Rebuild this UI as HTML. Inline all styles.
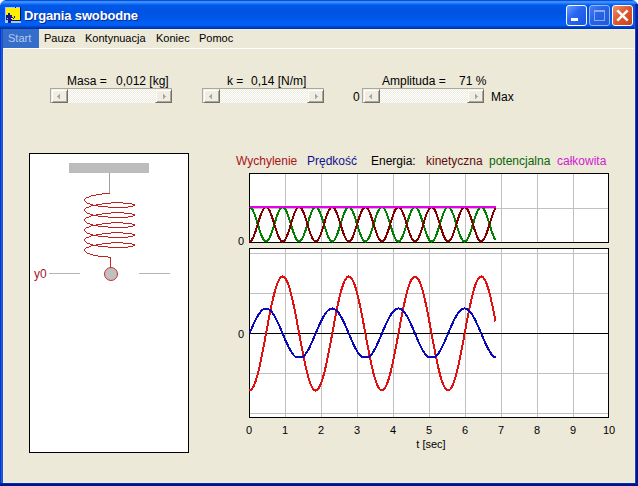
<!DOCTYPE html>
<html><head><meta charset="utf-8">
<style>
html,body{margin:0;padding:0;width:638px;height:486px;overflow:hidden;background:#fff;}
body{position:relative;font-family:"Liberation Sans",sans-serif;}
.a{position:absolute;white-space:pre;}
#title{position:absolute;left:0;top:0;width:638px;height:29px;border-radius:6px 6px 0 0;
background:linear-gradient(to bottom,#0A4FD6 0,#0A4FD6 1px,#3A8DFF 1px,#3A8DFF 3px,#1F78FA 3px,#1F78FA 4px,#0A66F0 4px,#0A66F0 5px,#0058E8 5px,#0054E2 12px,#0056E6 18px,#005EF4 22px,#0060F6 25px,#0052E2 26px,#0044C8 27px,#0036AC 28px,#0030A0 29px);}
#ttext{position:absolute;left:24px;top:8px;font-weight:bold;font-size:13px;color:#fff;text-shadow:1px 1px 0 #0A2A90;letter-spacing:-0.15px;}
.tb{position:absolute;top:5px;width:19px;height:19px;border:1px solid #fff;border-radius:3px;}
#lf{position:absolute;left:0;top:29px;width:3px;height:457px;background:linear-gradient(to right,#0038D2 0,#0038D2 1px,#1E5AE6 1px,#1E5AE6 2px,#2A4CAA 2px);}
#rf{position:absolute;left:635px;top:29px;width:3px;height:457px;background:linear-gradient(to right,#2A40A0 0,#2A40A0 1px,#001496 1px);}
#bf{position:absolute;left:0;top:483px;width:638px;height:3px;background:linear-gradient(to bottom,#0A2A90 0,#0A2A90 1px,#00138F 1px);}
#client{position:absolute;left:3px;top:29px;width:630px;height:452px;border:1px solid #E6F0FF;background:#ECE9D8;}
#menu{position:absolute;left:4px;top:30px;width:630px;height:18px;background:#ECE9D8;}
#mline{position:absolute;left:4px;top:48px;width:630px;height:1px;background:#fff;}
#start{position:absolute;left:3px;top:29px;width:36px;height:19px;background:#356DCB;}
.mi{position:absolute;top:32px;font-size:11px;line-height:13px;color:#000;}
.lbl{position:absolute;font-size:12px;line-height:14px;color:#000;white-space:pre;}
.sb{position:absolute;top:88px;width:122px;height:15px;}
.sbt{position:absolute;left:0;top:0;width:122px;height:15px;box-sizing:border-box;border-top:1px solid #ACA899;border-left:1px solid #ACA899;
background-color:#fff;background-image:linear-gradient(45deg,#EEECE0 25%,transparent 25%,transparent 75%,#EEECE0 75%),linear-gradient(45deg,#EEECE0 25%,transparent 25%,transparent 75%,#EEECE0 75%);background-size:2px 2px;background-position:0 0,1px 1px;}
.btn{position:absolute;top:1px;width:17px;height:14px;box-sizing:border-box;background:#F0EEE4;
border-top:1px solid #F1EFE2;border-left:1px solid #F1EFE2;border-right:1px solid #716F64;border-bottom:1px solid #716F64;
box-shadow:inset 1px 1px 0 #fff,inset -1px -1px 0 #ACA899;}
.arr{position:absolute;left:0;top:0;}
.xl{position:absolute;top:424px;width:40px;text-align:center;font-size:11px;line-height:13px;color:#000;}
</style></head><body>
<div id="title"></div>
<div style="position:absolute;left:634px;top:4px;width:4px;height:25px;background:linear-gradient(to right,#1A50D8 0,#1A50D8 1px,#0A34B8 1px,#0A34B8 2px,#0626A8 2px)"></div>
<svg class="a" style="left:5px;top:7px" width="16" height="16" viewBox="0 0 16 16" shape-rendering="crispEdges">
<rect x="0" y="0" width="16" height="16" fill="#A8C8F8"/>
<rect x="1" y="1" width="14" height="12" fill="#FFF000"/>
<rect x="15" y="0" width="1" height="14" fill="#0A1A70"/>
<rect x="6" y="13" width="10" height="1" fill="#0A1A70"/>
<rect x="10" y="0" width="1" height="1" fill="#0A1A50"/>
<rect x="3" y="6" width="2" height="2" fill="#0A1A70"/>
<rect x="1" y="8" width="6" height="5" fill="#14148C"/>
<rect x="2" y="11" width="1" height="1" fill="#C8D0FF"/>
<rect x="6" y="11" width="1" height="1" fill="#C8D0FF"/>
<rect x="7" y="10" width="1" height="1" fill="#0A1A70"/>
<rect x="8" y="11" width="1" height="1" fill="#0A1A70"/>
<rect x="9" y="9" width="1" height="2" fill="#0A1A70"/>
<rect x="3" y="13" width="3" height="3" fill="#14148C"/>
</svg>
<div id="ttext" class="a">Drgania swobodne</div>
<div class="tb" style="left:566px;background:linear-gradient(135deg,#6A9CFF 0%,#2A68F0 40%,#1A54E0 100%)"><div style="position:absolute;left:4px;top:12px;width:7px;height:3px;background:#fff"></div></div>
<div class="tb" style="left:589px;border-color:#8CB4FF;background:linear-gradient(135deg,#4A80F0 0%,#2A64E6 40%,#1E58DC 100%)"><div style="position:absolute;left:4px;top:4px;width:9px;height:8px;border:1px solid #8AAAF0;border-top-width:2px"></div></div>
<div class="tb" style="left:612px;background:linear-gradient(135deg,#F09070 0%,#E05A30 45%,#C8401A 100%)"><svg class="a" style="left:0;top:0" width="19" height="19"><path d="M4.3,4.3 L14.7,14.7 M14.7,4.3 L4.3,14.7" stroke="#fff" stroke-width="2.5"/></svg></div>
<div id="lf"></div><div id="rf"></div><div id="bf"></div>
<div id="client"></div>
<div id="menu"></div>
<div id="mline"></div>
<div id="start"></div>
<div class="mi a" style="left:8px;color:#B4C8EC">Start</div>
<div class="mi a" style="left:44px">Pauza</div>
<div class="mi a" style="left:85px">Kontynuacja</div>
<div class="mi a" style="left:156px">Koniec</div>
<div class="mi a" style="left:199px">Pomoc</div>

<div class="lbl" style="left:67px;top:74px">Masa =</div>
<div class="lbl" style="left:116px;top:74px">0,012 [kg]</div>
<div class="lbl" style="left:227px;top:74px">k =</div>
<div class="lbl" style="left:251px;top:74px">0,14 [N/m]</div>
<div class="lbl" style="left:382px;top:74px">Amplituda =</div>
<div class="lbl" style="left:459px;top:74px">71 %</div>
<div class="lbl" style="left:353px;top:90px">0</div>
<div class="lbl" style="left:491px;top:90px">Max</div>

<div class="sb" style="left:50px"><div class="sbt"></div>
<div class="btn" style="left:1px"><svg class="arr" width="17" height="14"><rect x="5" y="6" width="1" height="1" fill="#ACA899"/><rect x="6" y="5" width="1" height="3" fill="#ACA899"/><rect x="7" y="4" width="1" height="5" fill="#ACA899"/></svg></div>
<div class="btn" style="left:105px"><svg class="arr" width="17" height="14"><rect x="7" y="4" width="1" height="5" fill="#ACA899"/><rect x="8" y="5" width="1" height="3" fill="#ACA899"/><rect x="9" y="6" width="1" height="1" fill="#ACA899"/></svg></div></div>
<div class="sb" style="left:202px"><div class="sbt"></div>
<div class="btn" style="left:1px"><svg class="arr" width="17" height="14"><rect x="5" y="6" width="1" height="1" fill="#ACA899"/><rect x="6" y="5" width="1" height="3" fill="#ACA899"/><rect x="7" y="4" width="1" height="5" fill="#ACA899"/></svg></div>
<div class="btn" style="left:105px"><svg class="arr" width="17" height="14"><rect x="7" y="4" width="1" height="5" fill="#ACA899"/><rect x="8" y="5" width="1" height="3" fill="#ACA899"/><rect x="9" y="6" width="1" height="1" fill="#ACA899"/></svg></div></div>
<div class="sb" style="left:362px"><div class="sbt"></div>
<div class="btn" style="left:1px"><svg class="arr" width="17" height="14"><rect x="5" y="6" width="1" height="1" fill="#ACA899"/><rect x="6" y="5" width="1" height="3" fill="#ACA899"/><rect x="7" y="4" width="1" height="5" fill="#ACA899"/></svg></div>
<div class="btn" style="left:105px"><svg class="arr" width="17" height="14"><rect x="7" y="4" width="1" height="5" fill="#ACA899"/><rect x="8" y="5" width="1" height="3" fill="#ACA899"/><rect x="9" y="6" width="1" height="1" fill="#ACA899"/></svg></div></div>

<div class="lbl" style="left:236px;top:154px;color:#A81418">Wychylenie</div>
<div class="lbl" style="left:307px;top:154px;color:#10108C">Prędkość</div>
<div class="lbl" style="left:371px;top:154px">Energia:</div>
<div class="lbl" style="left:426px;top:154px;color:#600C0C">kinetyczna</div>
<div class="lbl" style="left:489px;top:154px;color:#0A640A">potencjalna</div>
<div class="lbl" style="left:557px;top:154px;color:#D020D0">całkowita</div>

<svg class="a" style="left:0;top:0" width="638" height="486" viewBox="0 0 638 486">
<rect x="29.5" y="153.5" width="159" height="299" fill="#fff" stroke="#000" stroke-width="1"/>
<rect x="69" y="163" width="80" height="10" fill="#BCBCBC"/>
<line x1="109.5" y1="173" x2="109.5" y2="194" stroke="#A0A0A0" stroke-width="1"/>
<path d="M102,193h8v1h-8zM96,194h6v1h-6zM91,195h5v1h-5zM89,196h2v1h-2zM86,197h3v1h-3zM85,198h1v1h-1zM84,199h1v1h-1zM84,200h1v1h-1zM85,201h1v1h-1zM86,202h1v1h-1zM111,202h12v1h-12zM87,203h3v1h-3zM102,203h9v1h-9zM123,203h9v1h-9zM90,204h3v1h-3zM96,204h6v1h-6zM132,204h3v1h-3zM91,205h7v1h-7zM133,205h2v1h-2zM89,206h2v1h-2zM98,206h10v1h-10zM128,206h5v1h-5zM86,207h3v1h-3zM108,207h20v1h-20zM85,208h1v1h-1zM84,209h1v1h-1zM84,210h1v1h-1zM85,211h1v1h-1zM86,212h1v1h-1zM111,212h13v1h-13zM87,213h3v1h-3zM102,213h9v1h-9zM124,213h8v1h-8zM90,214h3v1h-3zM96,214h6v1h-6zM132,214h3v1h-3zM91,215h7v1h-7zM133,215h2v1h-2zM89,216h2v1h-2zM98,216h10v1h-10zM128,216h5v1h-5zM86,217h3v1h-3zM108,217h20v1h-20zM85,218h1v1h-1zM84,219h1v1h-1zM84,220h1v1h-1zM85,221h1v1h-1zM86,222h1v1h-1zM111,222h12v1h-12zM87,223h3v1h-3zM102,223h9v1h-9zM123,223h9v1h-9zM90,224h3v1h-3zM96,224h6v1h-6zM132,224h3v1h-3zM91,225h7v1h-7zM133,225h2v1h-2zM89,226h2v1h-2zM98,226h10v1h-10zM128,226h5v1h-5zM86,227h3v1h-3zM108,227h20v1h-20zM85,228h1v1h-1zM84,229h1v1h-1zM84,230h1v1h-1zM85,231h1v1h-1zM86,232h1v1h-1zM111,232h12v1h-12zM87,233h3v1h-3zM102,233h9v1h-9zM123,233h9v1h-9zM90,234h3v1h-3zM96,234h6v1h-6zM132,234h3v1h-3zM91,235h7v1h-7zM133,235h2v1h-2zM89,236h2v1h-2zM98,236h10v1h-10zM128,236h5v1h-5zM86,237h3v1h-3zM108,237h20v1h-20zM85,238h1v1h-1zM84,239h1v1h-1zM84,240h1v1h-1zM85,241h1v1h-1zM86,242h1v1h-1zM111,242h12v1h-12zM87,243h3v1h-3zM102,243h9v1h-9zM123,243h9v1h-9zM90,244h3v1h-3zM96,244h6v1h-6zM132,244h3v1h-3zM91,245h7v1h-7zM133,245h2v1h-2zM89,246h2v1h-2zM98,246h10v1h-10zM128,246h5v1h-5zM86,247h3v1h-3zM108,247h20v1h-20zM85,248h1v1h-1zM84,249h1v1h-1zM84,250h1v1h-1zM85,251h1v1h-1zM86,252h1v1h-1zM87,253h3v1h-3zM90,254h3v1h-3zM93,255h5v1h-5zM98,256h10v1h-10zM108,257h2v1h-2z" fill="#C02020" shape-rendering="crispEdges"/>
<line x1="110.5" y1="257" x2="110.5" y2="268" stroke="#C82828" stroke-width="1"/>
<circle cx="111" cy="274" r="6.5" fill="#C0C0C0" stroke="#C83030" stroke-width="1"/>
<line x1="49" y1="273.5" x2="80" y2="273.5" stroke="#B4B4B4" stroke-width="1"/>
<line x1="139" y1="273.5" x2="170" y2="273.5" stroke="#B4B4B4" stroke-width="1"/>

<rect x="249.5" y="173.5" width="359" height="69" fill="#fff" stroke="#000" stroke-width="1"/>
<g stroke="#C0C0C0" stroke-width="1"><line x1="285.5" y1="174" x2="285.5" y2="242" /><line x1="321.5" y1="174" x2="321.5" y2="242" /><line x1="357.5" y1="174" x2="357.5" y2="242" /><line x1="393.5" y1="174" x2="393.5" y2="242" /><line x1="429.5" y1="174" x2="429.5" y2="242" /><line x1="465.5" y1="174" x2="465.5" y2="242" /><line x1="501.5" y1="174" x2="501.5" y2="242" /><line x1="537.5" y1="174" x2="537.5" y2="242" /><line x1="573.5" y1="174" x2="573.5" y2="242" /><line x1="250" y1="208.5" x2="608" y2="208.5"/></g>
<path d="M249.5,207.0L250.5,207.3L251.5,208.2L252.5,209.7L253.5,211.7L254.5,214.2L255.5,217.0L256.5,220.1L257.5,223.3L258.5,226.6L259.5,229.8L260.5,232.8L261.5,235.5L262.5,237.7L263.5,239.5L264.5,240.8L265.5,241.4L266.5,241.4L267.5,240.9L268.5,239.7L269.5,237.9L270.5,235.7L271.5,233.1L272.5,230.1L273.5,226.9L274.5,223.7L275.5,220.4L276.5,217.3L277.5,214.5L278.5,212.0L279.5,209.9L280.5,208.4L281.5,207.4L282.5,207.0L283.5,207.3L284.5,208.1L285.5,209.5L286.5,211.5L287.5,213.9L288.5,216.7L289.5,219.8L290.5,223.0L291.5,226.3L292.5,229.5L293.5,232.5L294.5,235.2L295.5,237.5L296.5,239.4L297.5,240.7L298.5,241.4L299.5,241.5L300.5,240.9L301.5,239.8L302.5,238.1L303.5,235.9L304.5,233.3L305.5,230.4L306.5,227.3L307.5,224.0L308.5,220.8L309.5,217.6L310.5,214.7L311.5,212.2L312.5,210.1L313.5,208.5L314.5,207.4L315.5,207.0L316.5,207.2L317.5,208.0L318.5,209.4L319.5,211.3L320.5,213.7L321.5,216.4L322.5,219.5L323.5,222.7L324.5,226.0L325.5,229.2L326.5,232.2L327.5,235.0L328.5,237.3L329.5,239.2L330.5,240.6L331.5,241.3L332.5,241.5L333.5,241.0L334.5,240.0L335.5,238.3L336.5,236.2L337.5,233.6L338.5,230.7L339.5,227.6L340.5,224.3L341.5,221.1L342.5,217.9L343.5,215.0L344.5,212.4L345.5,210.3L346.5,208.6L347.5,207.5L348.5,207.0L349.5,207.2L350.5,207.9L351.5,209.2L352.5,211.1L353.5,213.4L354.5,216.2L355.5,219.2L356.5,222.4L357.5,225.6L358.5,228.9L359.5,231.9L360.5,234.7L361.5,237.1L362.5,239.0L363.5,240.4L364.5,241.3L365.5,241.5L366.5,241.1L367.5,240.1L368.5,238.5L369.5,236.4L370.5,233.9L371.5,231.0L372.5,227.9L373.5,224.7L374.5,221.4L375.5,218.2L376.5,215.3L377.5,212.7L378.5,210.5L379.5,208.8L380.5,207.6L381.5,207.0L382.5,207.1L383.5,207.8L384.5,209.1L385.5,210.9L386.5,213.2L387.5,215.9L388.5,218.9L389.5,222.0L390.5,225.3L391.5,228.5L392.5,231.6L393.5,234.4L394.5,236.9L395.5,238.9L396.5,240.3L397.5,241.2L398.5,241.5L399.5,241.2L400.5,240.2L401.5,238.7L402.5,236.6L403.5,234.2L404.5,231.3L405.5,228.2L406.5,225.0L407.5,221.7L408.5,218.5L409.5,215.6L410.5,212.9L411.5,210.7L412.5,208.9L413.5,207.7L414.5,207.1L415.5,207.1L416.5,207.7L417.5,208.9L418.5,210.7L419.5,212.9L420.5,215.6L421.5,218.5L422.5,221.7L423.5,225.0L424.5,228.2L425.5,231.3L426.5,234.2L427.5,236.6L428.5,238.7L429.5,240.2L430.5,241.2L431.5,241.5L432.5,241.2L433.5,240.3L434.5,238.9L435.5,236.9L436.5,234.4L437.5,231.6L438.5,228.5L439.5,225.3L440.5,222.0L441.5,218.9L442.5,215.9L443.5,213.2L444.5,210.9L445.5,209.1L446.5,207.8L447.5,207.1L448.5,207.0L449.5,207.6L450.5,208.8L451.5,210.5L452.5,212.7L453.5,215.3L454.5,218.2L455.5,221.4L456.5,224.7L457.5,227.9L458.5,231.0L459.5,233.9L460.5,236.4L461.5,238.5L462.5,240.1L463.5,241.1L464.5,241.5L465.5,241.3L466.5,240.4L467.5,239.0L468.5,237.1L469.5,234.7L470.5,231.9L471.5,228.9L472.5,225.6L473.5,222.4L474.5,219.2L475.5,216.2L476.5,213.4L477.5,211.1L478.5,209.2L479.5,207.9L480.5,207.2L481.5,207.0L482.5,207.5L483.5,208.6L484.5,210.3L485.5,212.4L486.5,215.0L487.5,217.9L488.5,221.1L489.5,224.3L490.5,227.6L491.5,230.7L492.5,233.6L493.5,236.2L494.5,238.3L495.5,240.0" fill="none" stroke="#008000" stroke-width="2" shape-rendering="crispEdges"/>
<path d="M249.5,241.5L250.5,241.2L251.5,240.3L252.5,238.8L253.5,236.8L254.5,234.3L255.5,231.5L256.5,228.4L257.5,225.2L258.5,221.9L259.5,218.7L260.5,215.7L261.5,213.0L262.5,210.8L263.5,209.0L264.5,207.7L265.5,207.1L266.5,207.1L267.5,207.6L268.5,208.8L269.5,210.6L270.5,212.8L271.5,215.4L272.5,218.4L273.5,221.6L274.5,224.8L275.5,228.1L276.5,231.2L277.5,234.0L278.5,236.5L279.5,238.6L280.5,240.1L281.5,241.1L282.5,241.5L283.5,241.2L284.5,240.4L285.5,239.0L286.5,237.0L287.5,234.6L288.5,231.8L289.5,228.7L290.5,225.5L291.5,222.2L292.5,219.0L293.5,216.0L294.5,213.3L295.5,211.0L296.5,209.1L297.5,207.8L298.5,207.1L299.5,207.0L300.5,207.6L301.5,208.7L302.5,210.4L303.5,212.6L304.5,215.2L305.5,218.1L306.5,221.2L307.5,224.5L308.5,227.7L309.5,230.9L310.5,233.8L311.5,236.3L312.5,238.4L313.5,240.0L314.5,241.1L315.5,241.5L316.5,241.3L317.5,240.5L318.5,239.1L319.5,237.2L320.5,234.8L321.5,232.1L322.5,229.0L323.5,225.8L324.5,222.5L325.5,219.3L326.5,216.3L327.5,213.5L328.5,211.2L329.5,209.3L330.5,207.9L331.5,207.2L332.5,207.0L333.5,207.5L334.5,208.5L335.5,210.2L336.5,212.3L337.5,214.9L338.5,217.8L339.5,220.9L340.5,224.2L341.5,227.4L342.5,230.6L343.5,233.5L344.5,236.1L345.5,238.2L346.5,239.9L347.5,241.0L348.5,241.5L349.5,241.3L350.5,240.6L351.5,239.3L352.5,237.4L353.5,235.1L354.5,232.3L355.5,229.3L356.5,226.1L357.5,222.9L358.5,219.6L359.5,216.6L360.5,213.8L361.5,211.4L362.5,209.5L363.5,208.1L364.5,207.2L365.5,207.0L366.5,207.4L367.5,208.4L368.5,210.0L369.5,212.1L370.5,214.6L371.5,217.5L372.5,220.6L373.5,223.8L374.5,227.1L375.5,230.3L376.5,233.2L377.5,235.8L378.5,238.0L379.5,239.7L380.5,240.9L381.5,241.5L382.5,241.4L383.5,240.7L384.5,239.4L385.5,237.6L386.5,235.3L387.5,232.6L388.5,229.6L389.5,226.5L390.5,223.2L391.5,220.0L392.5,216.9L393.5,214.1L394.5,211.6L395.5,209.6L396.5,208.2L397.5,207.3L398.5,207.0L399.5,207.3L400.5,208.3L401.5,209.8L402.5,211.9L403.5,214.3L404.5,217.2L405.5,220.3L406.5,223.5L407.5,226.8L408.5,230.0L409.5,232.9L410.5,235.6L411.5,237.8L412.5,239.6L413.5,240.8L414.5,241.4L415.5,241.4L416.5,240.8L417.5,239.6L418.5,237.8L419.5,235.6L420.5,232.9L421.5,230.0L422.5,226.8L423.5,223.5L424.5,220.3L425.5,217.2L426.5,214.3L427.5,211.9L428.5,209.8L429.5,208.3L430.5,207.3L431.5,207.0L432.5,207.3L433.5,208.2L434.5,209.6L435.5,211.6L436.5,214.1L437.5,216.9L438.5,220.0L439.5,223.2L440.5,226.5L441.5,229.6L442.5,232.6L443.5,235.3L444.5,237.6L445.5,239.4L446.5,240.7L447.5,241.4L448.5,241.5L449.5,240.9L450.5,239.7L451.5,238.0L452.5,235.8L453.5,233.2L454.5,230.3L455.5,227.1L456.5,223.8L457.5,220.6L458.5,217.5L459.5,214.6L460.5,212.1L461.5,210.0L462.5,208.4L463.5,207.4L464.5,207.0L465.5,207.2L466.5,208.1L467.5,209.5L468.5,211.4L469.5,213.8L470.5,216.6L471.5,219.6L472.5,222.9L473.5,226.1L474.5,229.3L475.5,232.3L476.5,235.1L477.5,237.4L478.5,239.3L479.5,240.6L480.5,241.3L481.5,241.5L482.5,241.0L483.5,239.9L484.5,238.2L485.5,236.1L486.5,233.5L487.5,230.6L488.5,227.4L489.5,224.2L490.5,220.9L491.5,217.8L492.5,214.9L493.5,212.3L494.5,210.2L495.5,208.5" fill="none" stroke="#800000" stroke-width="2" shape-rendering="crispEdges"/>
<line x1="249.5" y1="207" x2="496" y2="207" stroke="#E800E8" stroke-width="2" shape-rendering="crispEdges"/>

<rect x="249.5" y="248.5" width="359" height="169" fill="#fff" stroke="#000" stroke-width="1"/>
<g stroke="#C0C0C0" stroke-width="1"><line x1="285.5" y1="249" x2="285.5" y2="417" /><line x1="321.5" y1="249" x2="321.5" y2="417" /><line x1="357.5" y1="249" x2="357.5" y2="417" /><line x1="393.5" y1="249" x2="393.5" y2="417" /><line x1="429.5" y1="249" x2="429.5" y2="417" /><line x1="465.5" y1="249" x2="465.5" y2="417" /><line x1="501.5" y1="249" x2="501.5" y2="417" /><line x1="537.5" y1="249" x2="537.5" y2="417" /><line x1="573.5" y1="249" x2="573.5" y2="417" /><line x1="250" y1="253.5" x2="608" y2="253.5" /><line x1="250" y1="293.5" x2="608" y2="293.5" /><line x1="250" y1="373.5" x2="608" y2="373.5" /><line x1="250" y1="413.5" x2="608" y2="413.5" /></g>
<line x1="250" y1="333.5" x2="608" y2="333.5" stroke="#000" stroke-width="1"/>
<path d="M249.5,390.5L250.5,390.2L251.5,389.5L252.5,388.2L253.5,386.4L254.5,384.2L255.5,381.5L256.5,378.4L257.5,374.8L258.5,370.9L259.5,366.7L260.5,362.2L261.5,357.4L262.5,352.3L263.5,347.2L264.5,341.9L265.5,336.5L266.5,331.1L267.5,325.7L268.5,320.4L269.5,315.2L270.5,310.1L271.5,305.3L272.5,300.7L273.5,296.5L274.5,292.5L275.5,289.0L276.5,285.8L277.5,283.0L278.5,280.8L279.5,278.9L280.5,277.6L281.5,276.8L282.5,276.5L283.5,276.7L284.5,277.4L285.5,278.6L286.5,280.4L287.5,282.6L288.5,285.2L289.5,288.3L290.5,291.8L291.5,295.7L292.5,299.9L293.5,304.4L294.5,309.2L295.5,314.1L296.5,319.3L297.5,324.6L298.5,330.0L299.5,335.4L300.5,340.8L301.5,346.1L302.5,351.3L303.5,356.4L304.5,361.2L305.5,365.8L306.5,370.1L307.5,374.1L308.5,377.7L309.5,380.9L310.5,383.7L311.5,386.0L312.5,387.9L313.5,389.3L314.5,390.1L315.5,390.5L316.5,390.3L317.5,389.7L318.5,388.5L319.5,386.8L320.5,384.7L321.5,382.1L322.5,379.0L323.5,375.6L324.5,371.7L325.5,367.6L326.5,363.1L327.5,358.3L328.5,353.4L329.5,348.2L330.5,342.9L331.5,337.6L332.5,332.1L333.5,326.8L334.5,321.4L335.5,316.2L336.5,311.1L337.5,306.3L338.5,301.6L339.5,297.3L340.5,293.3L341.5,289.6L342.5,286.4L343.5,283.6L344.5,281.2L345.5,279.3L346.5,277.9L347.5,276.9L348.5,276.5L349.5,276.6L350.5,277.2L351.5,278.4L352.5,280.0L353.5,282.1L354.5,284.6L355.5,287.6L356.5,291.1L357.5,294.9L358.5,299.0L359.5,303.5L360.5,308.2L361.5,313.1L362.5,318.3L363.5,323.5L364.5,328.9L365.5,334.3L366.5,339.7L367.5,345.1L368.5,350.3L369.5,355.4L370.5,360.3L371.5,364.9L372.5,369.3L373.5,373.3L374.5,377.0L375.5,380.3L376.5,383.2L377.5,385.6L378.5,387.6L379.5,389.0L380.5,390.0L381.5,390.5L382.5,390.4L383.5,389.8L384.5,388.8L385.5,387.2L386.5,385.2L387.5,382.6L388.5,379.7L389.5,376.3L390.5,372.5L391.5,368.4L392.5,364.0L393.5,359.3L394.5,354.4L395.5,349.3L396.5,344.0L397.5,338.6L398.5,333.2L399.5,327.8L400.5,322.5L401.5,317.2L402.5,312.1L403.5,307.2L404.5,302.5L405.5,298.1L406.5,294.1L407.5,290.3L408.5,287.0L409.5,284.1L410.5,281.6L411.5,279.6L412.5,278.1L413.5,277.1L414.5,276.6L415.5,276.6L416.5,277.1L417.5,278.1L418.5,279.6L419.5,281.6L420.5,284.1L421.5,287.0L422.5,290.3L423.5,294.1L424.5,298.1L425.5,302.5L426.5,307.2L427.5,312.1L428.5,317.2L429.5,322.5L430.5,327.8L431.5,333.2L432.5,338.6L433.5,344.0L434.5,349.3L435.5,354.4L436.5,359.3L437.5,364.0L438.5,368.4L439.5,372.5L440.5,376.3L441.5,379.7L442.5,382.6L443.5,385.2L444.5,387.2L445.5,388.8L446.5,389.8L447.5,390.4L448.5,390.5L449.5,390.0L450.5,389.0L451.5,387.6L452.5,385.6L453.5,383.2L454.5,380.3L455.5,377.0L456.5,373.3L457.5,369.3L458.5,364.9L459.5,360.3L460.5,355.4L461.5,350.3L462.5,345.1L463.5,339.7L464.5,334.3L465.5,328.9L466.5,323.5L467.5,318.3L468.5,313.1L469.5,308.2L470.5,303.5L471.5,299.0L472.5,294.9L473.5,291.1L474.5,287.6L475.5,284.6L476.5,282.1L477.5,280.0L478.5,278.4L479.5,277.2L480.5,276.6L481.5,276.5L482.5,276.9L483.5,277.9L484.5,279.3L485.5,281.2L486.5,283.6L487.5,286.4L488.5,289.6L489.5,293.3L490.5,297.3L491.5,301.6L492.5,306.3L493.5,311.1L494.5,316.2L495.5,321.4" fill="none" stroke="#E01010" stroke-width="2" shape-rendering="crispEdges"/>
<path d="M249.5,333.5L250.5,331.1L251.5,328.8L252.5,326.5L253.5,324.2L254.5,322.1L255.5,320.0L256.5,318.1L257.5,316.3L258.5,314.6L259.5,313.2L260.5,311.9L261.5,310.8L262.5,309.9L263.5,309.2L264.5,308.8L265.5,308.5L266.5,308.5L267.5,308.7L268.5,309.2L269.5,309.8L270.5,310.7L271.5,311.8L272.5,313.0L273.5,314.5L274.5,316.1L275.5,317.9L276.5,319.8L277.5,321.9L278.5,324.0L279.5,326.2L280.5,328.6L281.5,330.9L282.5,333.3L283.5,335.6L284.5,338.0L285.5,340.3L286.5,342.5L287.5,344.7L288.5,346.8L289.5,348.7L290.5,350.5L291.5,352.2L292.5,353.7L293.5,355.0L294.5,356.1L295.5,357.0L296.5,357.0L297.5,357.0L298.5,357.0L299.5,357.0L300.5,357.0L301.5,357.0L302.5,357.0L303.5,356.4L304.5,355.3L305.5,354.1L306.5,352.7L307.5,351.1L308.5,349.3L309.5,347.4L310.5,345.3L311.5,343.2L312.5,341.0L313.5,338.7L314.5,336.3L315.5,334.0L316.5,331.6L317.5,329.2L318.5,326.9L319.5,324.7L320.5,322.5L321.5,320.4L322.5,318.5L323.5,316.6L324.5,315.0L325.5,313.5L326.5,312.1L327.5,311.0L328.5,310.1L329.5,309.3L330.5,308.8L331.5,308.6L332.5,308.5L333.5,308.7L334.5,309.1L335.5,309.7L336.5,310.5L337.5,311.5L338.5,312.8L339.5,314.2L340.5,315.8L341.5,317.5L342.5,319.4L343.5,321.4L344.5,323.6L345.5,325.8L346.5,328.1L347.5,330.4L348.5,332.8L349.5,335.2L350.5,337.5L351.5,339.8L352.5,342.1L353.5,344.3L354.5,346.4L355.5,348.3L356.5,350.2L357.5,351.9L358.5,353.4L359.5,354.7L360.5,355.9L361.5,356.8L362.5,357.0L363.5,357.0L364.5,357.0L365.5,357.0L366.5,357.0L367.5,357.0L368.5,357.0L369.5,356.6L370.5,355.6L371.5,354.4L372.5,353.0L373.5,351.4L374.5,349.7L375.5,347.8L376.5,345.8L377.5,343.6L378.5,341.4L379.5,339.1L380.5,336.8L381.5,334.4L382.5,332.1L383.5,329.7L384.5,327.4L385.5,325.1L386.5,322.9L387.5,320.8L388.5,318.8L389.5,317.0L390.5,315.3L391.5,313.7L392.5,312.4L393.5,311.2L394.5,310.2L395.5,309.5L396.5,308.9L397.5,308.6L398.5,308.5L399.5,308.6L400.5,309.0L401.5,309.5L402.5,310.3L403.5,311.3L404.5,312.5L405.5,313.9L406.5,315.4L407.5,317.2L408.5,319.0L409.5,321.0L410.5,323.1L411.5,325.3L412.5,327.6L413.5,330.0L414.5,332.3L415.5,334.7L416.5,337.0L417.5,339.4L418.5,341.7L419.5,343.9L420.5,346.0L421.5,348.0L422.5,349.8L423.5,351.6L424.5,353.1L425.5,354.5L426.5,355.7L427.5,356.7L428.5,357.0L429.5,357.0L430.5,357.0L431.5,357.0L432.5,357.0L433.5,357.0L434.5,357.0L435.5,356.8L436.5,355.8L437.5,354.6L438.5,353.3L439.5,351.7L440.5,350.0L441.5,348.2L442.5,346.2L443.5,344.1L444.5,341.9L445.5,339.6L446.5,337.3L447.5,334.9L448.5,332.6L449.5,330.2L450.5,327.9L451.5,325.6L452.5,323.4L453.5,321.2L454.5,319.2L455.5,317.3L456.5,315.6L457.5,314.0L458.5,312.6L459.5,311.4L460.5,310.4L461.5,309.6L462.5,309.0L463.5,308.6L464.5,308.5L465.5,308.6L466.5,308.9L467.5,309.4L468.5,310.2L469.5,311.1L470.5,312.3L471.5,313.6L472.5,315.1L473.5,316.8L474.5,318.7L475.5,320.6L476.5,322.7L477.5,324.9L478.5,327.2L479.5,329.5L480.5,331.8L481.5,334.2L482.5,336.6L483.5,338.9L484.5,341.2L485.5,343.4L486.5,345.6L487.5,347.6L488.5,349.5L489.5,351.2L490.5,352.8L491.5,354.2L492.5,355.5L493.5,356.5L494.5,357.0L495.5,357.0" fill="none" stroke="#0A0AB8" stroke-width="2" shape-rendering="crispEdges"/>
</svg>
<div class="lbl" style="left:34px;top:267px;color:#A01828">y0</div>
<div class="xl" style="left:221px;top:235px">0</div>
<div class="xl" style="left:221px;top:328px">0</div>
<div class="xl" style="left:229px">0</div><div class="xl" style="left:265px">1</div><div class="xl" style="left:301px">2</div><div class="xl" style="left:337px">3</div><div class="xl" style="left:373px">4</div><div class="xl" style="left:409px">5</div><div class="xl" style="left:445px">6</div><div class="xl" style="left:481px">7</div><div class="xl" style="left:517px">8</div><div class="xl" style="left:553px">9</div><div class="xl" style="left:589px">10</div>
<div class="xl" style="left:411px;top:438px">t [sec]</div>
</body></html>
